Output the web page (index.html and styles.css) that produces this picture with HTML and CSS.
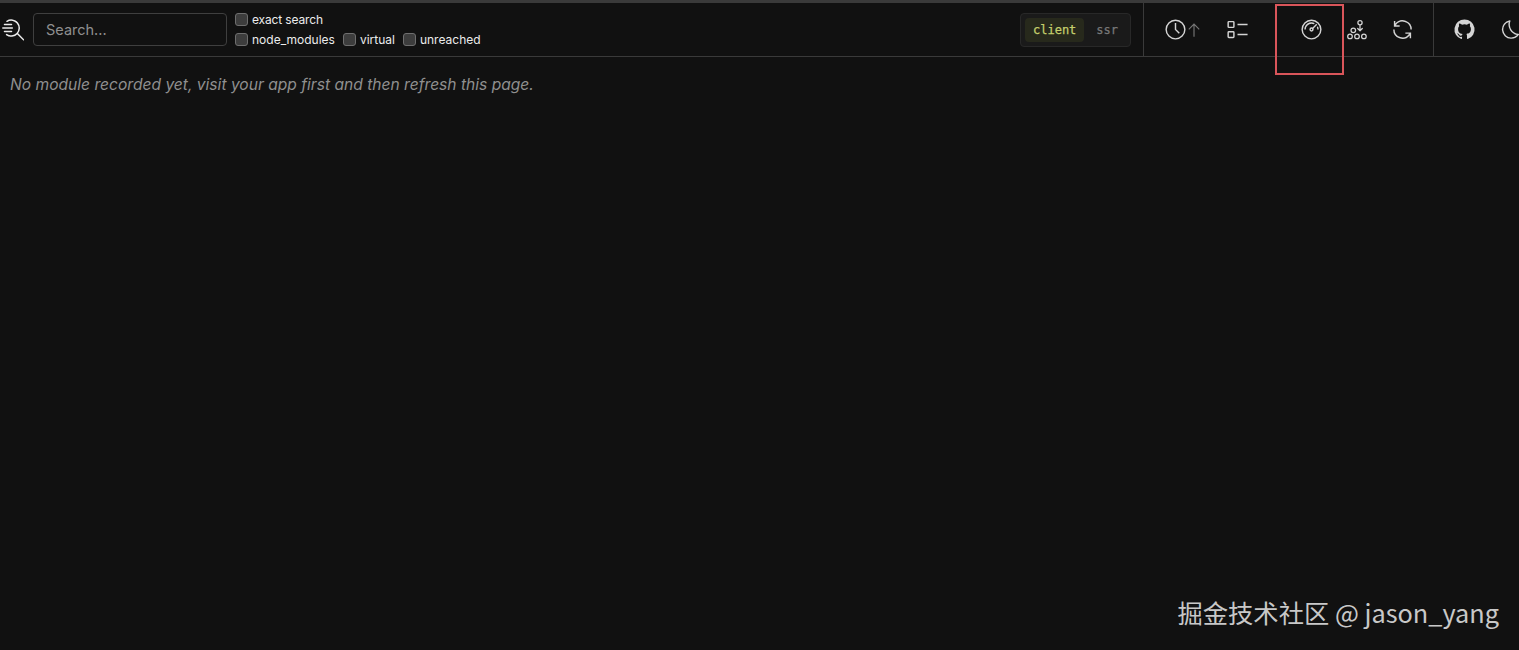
FILE: index.html
```html
<!DOCTYPE html>
<html lang="en">
<head>
<meta charset="utf-8">
<title>Vite Inspect</title>
<link rel="stylesheet" href="styles.css">
</head>
<body>
<div class="strip"></div>
<nav class="nav">
  <div class="left">
    <svg class="logo" viewBox="0 0 22 22" width="22" height="22" fill="none" stroke="#ececec" stroke-width="1.5" stroke-linecap="round"><path d="M5 2.3A8 8 0 1 1 4.6 15.6M15.6 14.8l6 6M2.5 5.5h7M.8 9h9.5M2.5 12.5h7"/></svg>
    <input class="search" type="text" placeholder="Search...">
    <div class="filters">
      <div class="filter-row"><label class="check exact"><input type="checkbox">exact search</label></div>
      <div class="filter-row">
        <label class="check"><input type="checkbox">node_modules</label>
        <label class="check"><input type="checkbox">virtual</label>
        <label class="check"><input type="checkbox">unreached</label>
      </div>
    </div>
  </div>
  <div class="env">
    <span class="env-btn active">client</span>
    <span class="env-btn">ssr</span>
  </div>
  <div class="tools">
    <svg class="icon t-time" viewBox="0 0 32 32"><path d="M16 30a14 14 0 1 1 14-14a14 14 0 0 1-14 14Zm0-26a12 12 0 1 0 12 12A12 12 0 0 0 16 4Z"/><path d="M20.59 22L15 16.41V7h2v8.58l5 5.01L20.59 22z"/></svg>
    <svg class="icon t-arrow" viewBox="0 0 32 32"><path d="M16 4L6 14l1.41 1.41L15 7.83V28h2V7.83l7.59 7.58L26 14L16 4z"/></svg>
    <svg class="icon t-list" viewBox="0 0 32 32"><path d="M16 8h14v2H16zm0 14h14v2H16zM10 14H4a2.002 2.002 0 0 1-2-2V6a2.002 2.002 0 0 1 2-2h6a2.002 2.002 0 0 1 2 2v6a2.002 2.002 0 0 1-2 2zM4 6v6h6V6zm6 22H4a2.002 2.002 0 0 1-2-2v-6a2.002 2.002 0 0 1 2-2h6a2.002 2.002 0 0 1 2 2v6a2.002 2.002 0 0 1-2 2zm-6-8v6h6v-6z"/></svg>
    <svg class="icon t-gauge" viewBox="0 0 32 32"><path d="M26 16a9.9 9.9 0 0 0-1.14-4.618l-1.495 1.496A7.95 7.95 0 0 1 24 16zm-2-6.586L22.586 8l-5.07 5.07A3.02 3.02 0 0 0 16 13a3 3 0 1 0 3 3a3.02 3.02 0 0 0-.07-1.516zM16 17a1 1 0 1 1 1-1a1 1 0 0 1-1 1zm0-9a7.95 7.95 0 0 1 3.122.635l1.496-1.495A9.98 9.98 0 0 0 6 16h2a8.01 8.01 0 0 1 8-8z"/><path d="M16 30a14 14 0 1 1 14-14a14.016 14.016 0 0 1-14 14zm0-26a12 12 0 1 0 12 12A12.014 12.014 0 0 0 16 4z"/></svg>
    <svg class="t-graph" viewBox="0 0 20 20" width="20" height="20" fill="none" stroke="#d4d4d4" stroke-width="1.25" stroke-linecap="round" stroke-linejoin="round"><circle cx="13" cy="2.8" r="2.1"/><path d="M13 5.4v5.4M10.7 8.5l2.3 2.3 2.3-2.3"/><circle cx="6.3" cy="10.3" r="2.3"/><circle cx="3" cy="16.4" r="2.3"/><circle cx="10" cy="16.4" r="2.3"/><circle cx="16.9" cy="16.4" r="2.3"/></svg>
    <svg class="icon t-refresh" viewBox="0 0 32 32"><path d="M12 10H6.78A11 11 0 0 1 27 16h2A13 13 0 0 0 6 7.68V4H4v8h8zm8 12h5.22A11 11 0 0 1 5 16H3a13 13 0 0 0 23 8.32V28h2v-8h-8z"/></svg>
  </div>
  <div class="links">
    <svg class="icon" viewBox="0 0 32 32"><path fill-rule="evenodd" d="M16 2a14 14 0 0 0-4.43 27.28c.7.13 1-.3 1-.67v-2.38c-3.89.84-4.71-1.88-4.71-1.88a3.71 3.71 0 0 0-1.62-2.05c-1.27-.86.1-.85.1-.85a2.94 2.94 0 0 1 2.14 1.45a3 3 0 0 0 4.08 1.16a2.93 2.93 0 0 1 .88-1.87c-3.1-.36-6.37-1.56-6.37-6.92a5.4 5.4 0 0 1 1.44-3.76a5 5 0 0 1 .14-3.7s1.17-.38 3.85 1.43a13.3 13.3 0 0 1 7 0c2.67-1.81 3.84-1.43 3.84-1.43a5 5 0 0 1 .14 3.7a5.4 5.4 0 0 1 1.44 3.76c0 5.38-3.27 6.56-6.39 6.91a3.33 3.33 0 0 1 .95 2.59v3.84c0 .46.25.81 1 .67A14 14 0 0 0 16 2Z"/></svg>
    <svg class="icon" viewBox="0 0 32 32"><path d="M13.503 5.414a15.076 15.076 0 0 0 11.593 18.194a11.113 11.113 0 0 1-7.975 3.39c-.138 0-.278.005-.418 0a11.094 11.094 0 0 1-3.2-21.584M14.98 3a1.002 1.002 0 0 0-.175.016a13.096 13.096 0 0 0 1.825 25.981c.164.006.328 0 .49 0a13.072 13.072 0 0 0 10.703-5.555a1.01 1.01 0 0 0-.783-1.565A13.08 13.08 0 0 1 15.89 4.38A1.015 1.015 0 0 0 14.98 3Z"/></svg>
  </div>
</nav>
<main class="content">No module recorded yet, visit your app first and then refresh this page.</main>
<div class="highlight"></div>
<div class="watermark">掘金技术社区 @ jason_yang</div>
</body>
</html>
```

FILE: styles.css
```css
* { box-sizing: border-box; }
html, body { height: 100%; }
body {
  margin: 0;
  overflow: hidden;
  background: #111111;
  color: #e6e6e6;
  font-family: "Inter", "Liberation Sans", sans-serif;
  position: relative;
}
.strip { height: 3px; background: #3a3a3a; }
.nav {
  display: flex;
  align-items: stretch;
  height: 54px;
  width: 1560px;
  border-bottom: 1px solid #3a3a3a;
}
.left {
  display: flex;
  align-items: center;
  width: 1020px;
  padding-left: 2px;
}
.logo { margin-right: 9px; flex: none; }
.search {
  width: 194px;
  height: 33px;
  padding: 0 12px;
  background: transparent;
  border: 1px solid #3f3f3f;
  border-radius: 4px;
  font: 14.5px "Inter", "Liberation Sans", sans-serif;
  color: #ccc;
  outline: none;
}
.search::placeholder { color: #8f8f8f; opacity: 1; }
.filters { margin-left: 8px; display: flex; flex-direction: column; gap: 5px; }
.filter-row { display: flex; gap: 8px; height: 15px; }
.check { display: flex; align-items: center; gap: 4px; font-size: 12px; color: #ececec; white-space: nowrap; }
.exact { letter-spacing: -.15px; }
.check input {
  appearance: none;
  width: 13px;
  height: 13px;
  margin: 0;
  background: #3d3d3d;
  border: 1px solid #6e6e6e;
  border-radius: 3px;
}
.env {
  align-self: center;
  display: flex;
  align-items: center;
  width: 111px;
  height: 34px;
  padding: 0 4px;
  background: #1a1a1a;
  border: 1px solid #282828;
  border-radius: 4px;
  font: 12px "DejaVu Sans Mono", "Liberation Mono", monospace;
  -webkit-text-stroke: .25px currentColor;
}
.env-btn { padding: 0 8px; height: 24px; line-height: 24px; color: #777; }
.env-btn.active { background: #27291c; color: #c4cf6c; border-radius: 4px; margin-right: 4px; }
.tools {
  display: flex;
  align-items: center;
  margin-left: 12px;
  width: 291px;
  height: 100%;
  border-left: 1px solid #3a3a3a;
  border-right: 1px solid #3a3a3a;
  flex: none;
}
.icon { width: 23px; height: 23px; fill: #d4d4d4; flex: none; }
.t-graph { flex: none; margin-left: 24px; }
.t-time { margin-left: 20px; }
.t-arrow { width: 18px; height: 18px; margin-left: -2px; fill: #777; }
.t-list { margin-left: 23px; }
.t-gauge { margin-left: 51px; }
.t-refresh { margin-left: 24px; }
.links { display: flex; align-items: center; padding-left: 19px; gap: 23px; }
.content {
  padding: 18px 10px;
  font-size: 15.6px;
  font-style: italic;
  color: #8f8f8f;
}
.highlight {
  position: absolute;
  left: 1275px;
  top: 4px;
  width: 69px;
  height: 71px;
  border: 2px solid #d9555a;
}
.watermark {
  position: absolute;
  right: 20px;
  top: 594px;
  font: 25.3px "Noto Sans CJK SC", "Noto Sans", sans-serif;
  color: #c8c8c8;
  white-space: nowrap;
}
```
